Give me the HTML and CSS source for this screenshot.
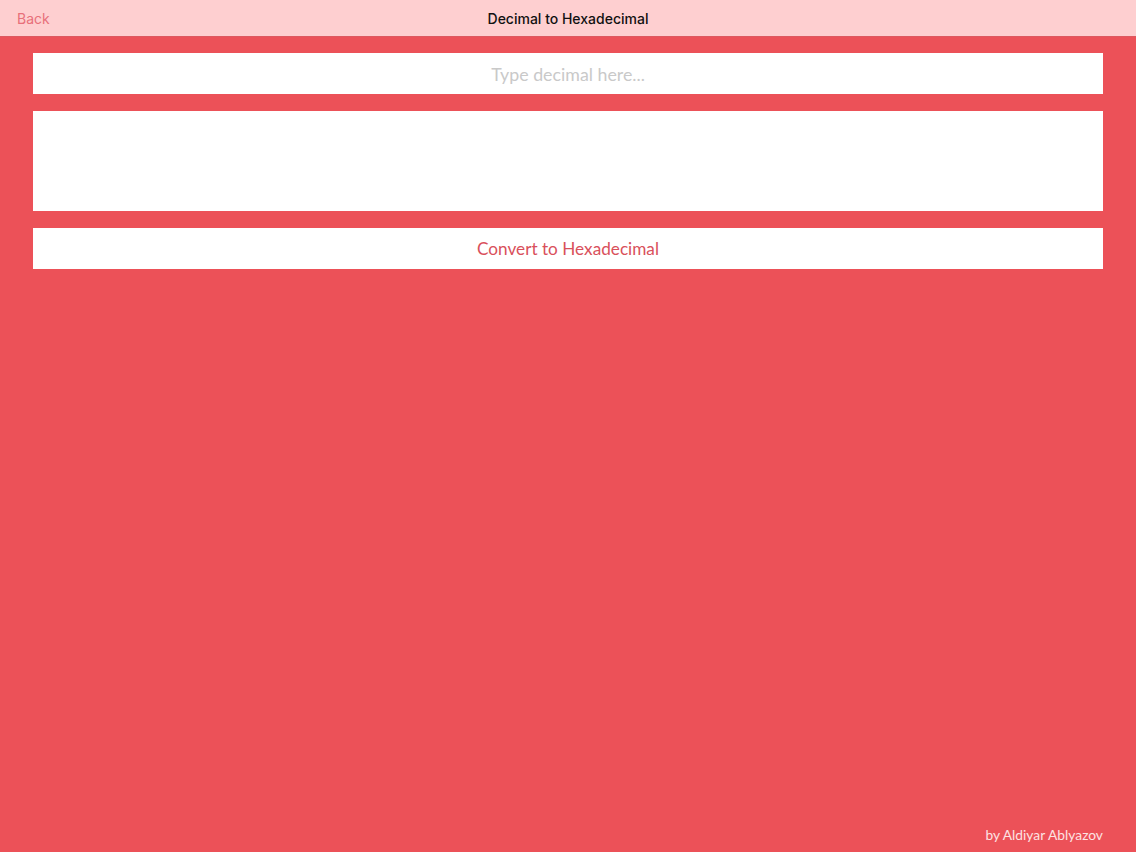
FILE: index.html
```html
<!DOCTYPE html>
<html>
<head>
<meta charset="utf-8">
<link rel="stylesheet" href="styles.css">
</head>
<body>
<div class="page">
  <header class="navbar">
    <span class="back">Back</span>
    <span class="title">Decimal to Hexadecimal</span>
  </header>
  <main class="content">
    <input class="field" type="text" placeholder="Type decimal here...">
    <div class="output"></div>
    <button class="convert">Convert to Hexadecimal</button>
  </main>
  <footer class="footer">by Aldiyar Ablyazov</footer>
</div>
</body>
</html>
```
FILE: styles.css
```css
html, body {
  margin: 0;
  padding: 0;
  height: 100%;
}
body {
  background: #ec5158;
  font-family: "Lato", "Open Sans", sans-serif;
}
.page {
  min-height: 100vh;
  display: flex;
  flex-direction: column;
  box-sizing: border-box;
}
.navbar {
  height: 36px;
  background: #fecfd0;
  border-bottom: 1px solid #dd5960;
  display: flex;
  align-items: center;
  justify-content: center;
  position: relative;
  font-family: "Inter", "Liberation Sans", sans-serif;
}
.back {
  position: absolute;
  left: 17px;
  top: 10px;
  font-size: 14px;
  color: #e8707a;
}
.title {
  font-size: 14px;
  font-weight: 500;
  color: #111;
}
.content {
  display: flex;
  flex-direction: column;
  gap: 17px;
  padding: 16px 33px 0 33px;
}
.field {
  height: 41px;
  box-sizing: border-box;
  border: none;
  outline: none;
  background: #fff;
  text-align: center;
  font-family: "Lato", sans-serif;
  font-size: 17.8px;
  color: #333;
  padding: 0;
}
.field::placeholder {
  color: #c9c9c9;
}
.output {
  height: 100px;
  background: #fff;
}
.convert {
  height: 41px;
  border: none;
  background: #fff;
  color: #d9505b;
  font-family: "Lato", sans-serif;
  font-size: 17.2px;
  padding: 0;
  cursor: pointer;
}
.footer {
  margin-top: auto;
  align-self: flex-end;
  padding: 0 33px 9px 0;
  font-size: 13.8px;
  color: #fde3e3;
}
```
